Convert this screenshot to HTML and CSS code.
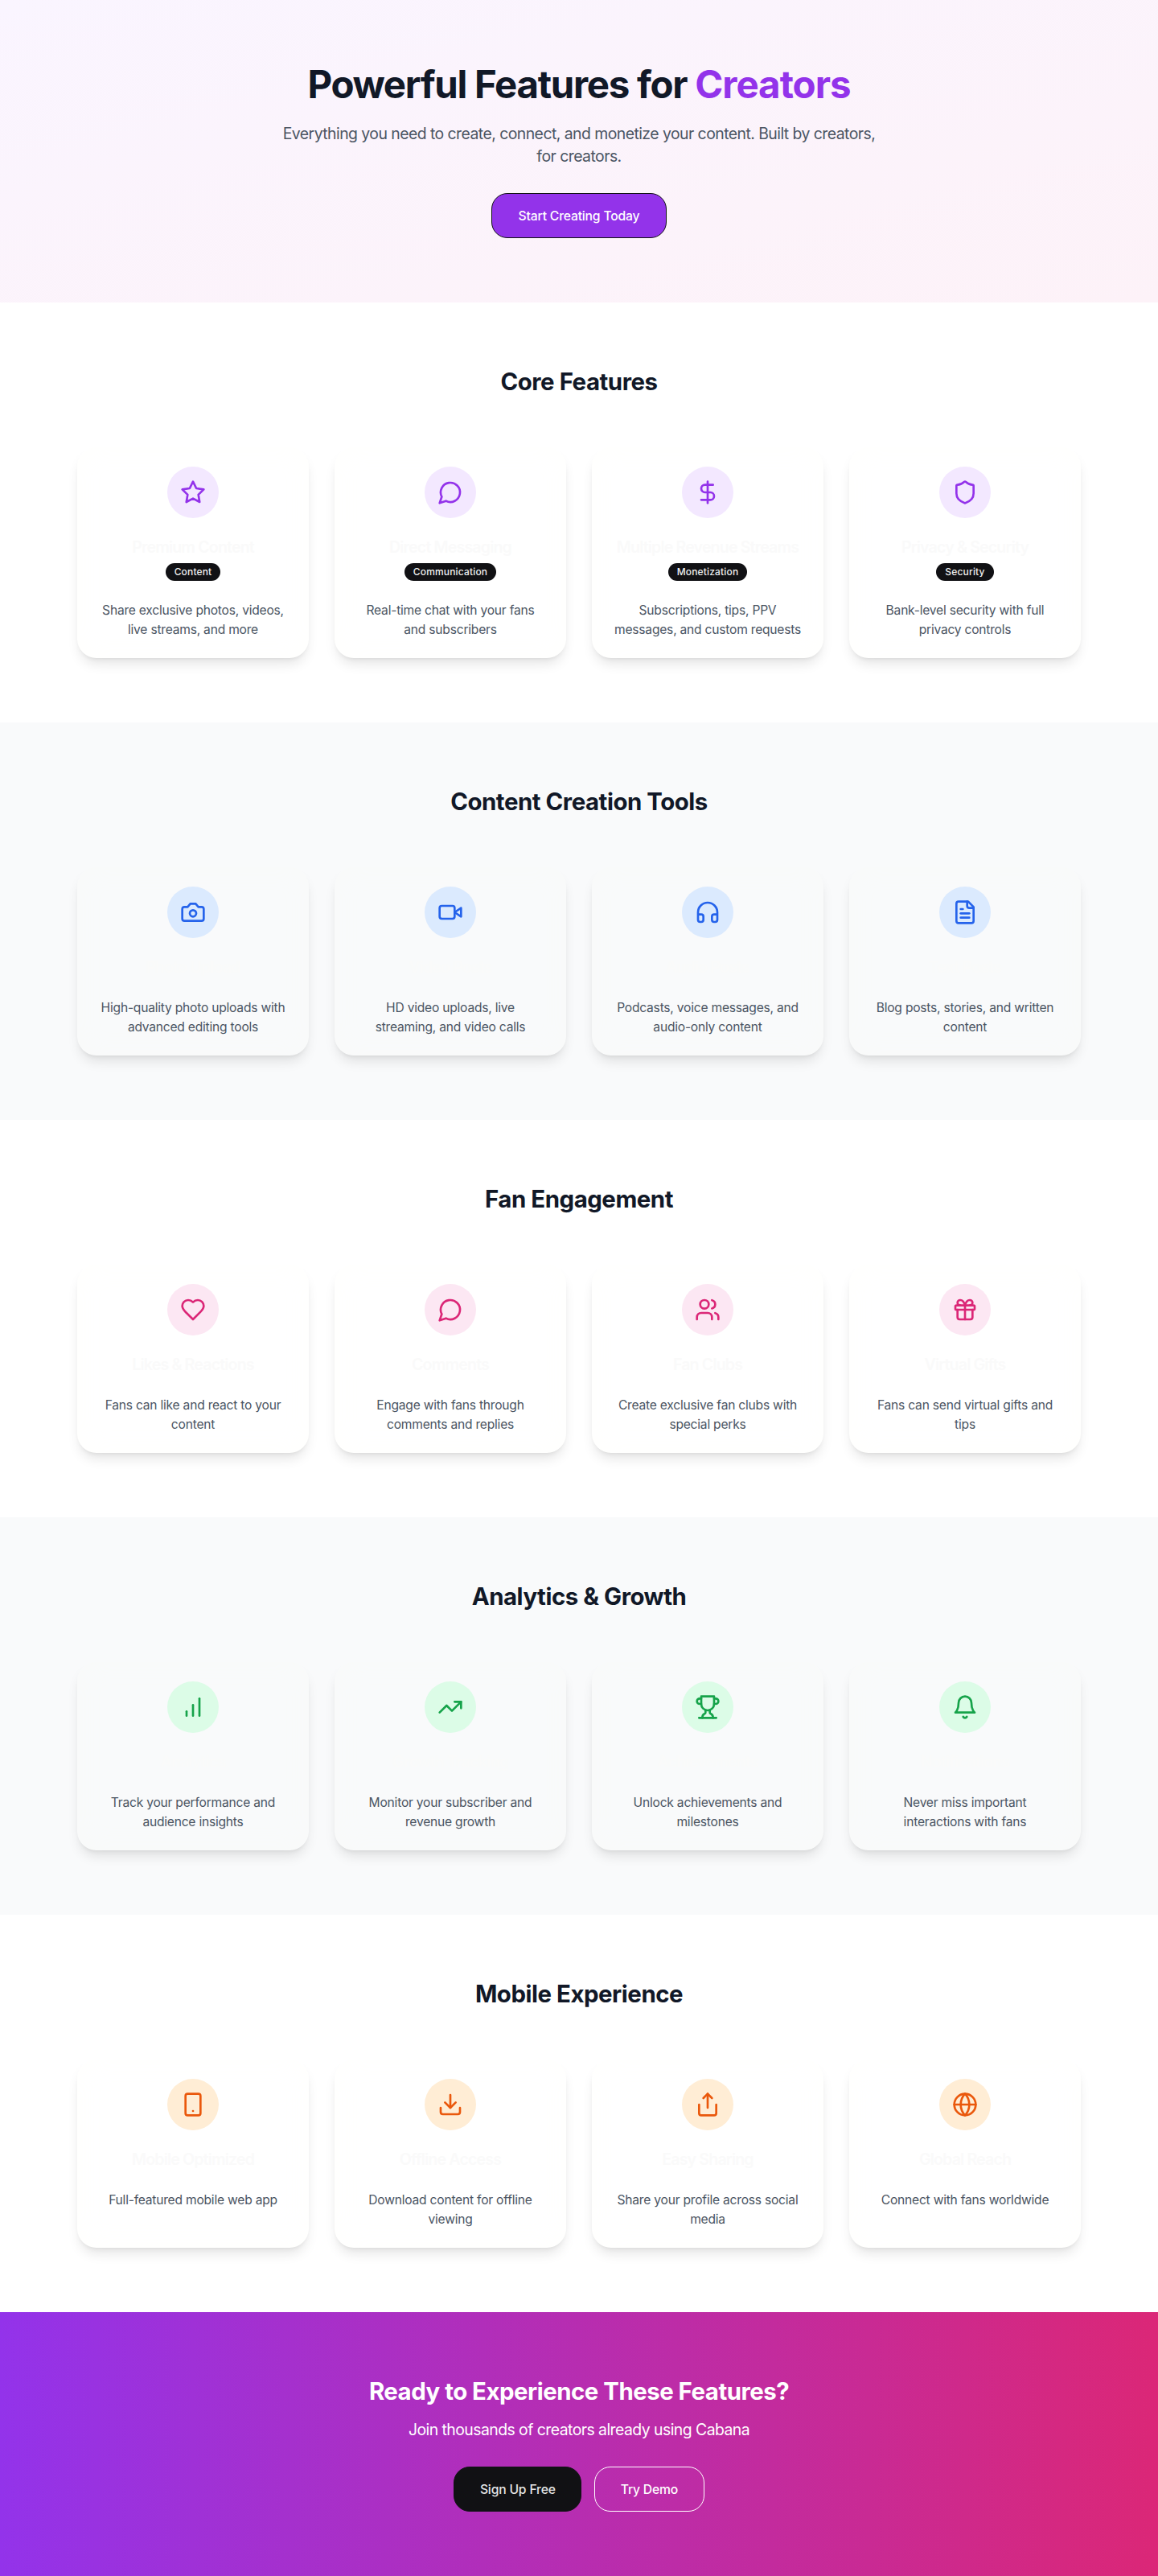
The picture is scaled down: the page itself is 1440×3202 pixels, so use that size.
FILE: index.html
```html
<!DOCTYPE html>
<html lang="en">
<head>
<meta charset="utf-8">
<title>Features - Cabana</title>
<meta name="viewport" content="width=device-width, initial-scale=1">
<link rel="stylesheet" href="styles.css">
</head>
<body>
<header class="hero">
  <h1 class="hero-title">Powerful Features for <span class="accent">Creators</span></h1>
  <p class="hero-text">Everything you need to create, connect, and monetize your content. Built by creators, for creators.</p>
  <a class="btn btn-brand">Start Creating Today</a>
</header>

<section class="section purple">
  <h2 class="section-title">Core Features</h2>
  <div class="grid">
    <article class="card">
      <div class="icon"><svg viewBox="0 0 24 24"><path d="M12 2l3.09 6.26L22 9.27l-5 4.87 1.18 6.88L12 17.77l-6.18 3.25L7 14.14 2 9.27l6.91-1.01L12 2z"/></svg></div>
      <h3 class="card-title">Premium Content</h3>
      <span class="badge">Content</span>
      <p class="card-text">Share exclusive photos, videos, live streams, and more</p>
    </article>
    <article class="card">
      <div class="icon"><svg viewBox="0 0 24 24"><path d="M7.9 20A9 9 0 1 0 4 16.1L2 22Z"/></svg></div>
      <h3 class="card-title">Direct Messaging</h3>
      <span class="badge">Communication</span>
      <p class="card-text">Real-time chat with your fans and subscribers</p>
    </article>
    <article class="card">
      <div class="icon"><svg viewBox="0 0 24 24"><path d="M12 2v20"/><path d="M17 5H9.5a3.5 3.5 0 0 0 0 7h5a3.5 3.5 0 0 1 0 7H6"/></svg></div>
      <h3 class="card-title">Multiple Revenue Streams</h3>
      <span class="badge">Monetization</span>
      <p class="card-text">Subscriptions, tips, PPV messages, and custom requests</p>
    </article>
    <article class="card">
      <div class="icon"><svg viewBox="0 0 24 24"><path d="M20 13c0 5-3.5 7.5-7.66 8.95a1 1 0 0 1-.67-.01C7.5 20.5 4 18 4 13V6a1 1 0 0 1 1-1c2 0 4.5-1.2 6.24-2.72a1.17 1.17 0 0 1 1.52 0C14.51 3.81 17 5 19 5a1 1 0 0 1 1 1z"/></svg></div>
      <h3 class="card-title">Privacy &amp; Security</h3>
      <span class="badge">Security</span>
      <p class="card-text">Bank-level security with full privacy controls</p>
    </article>
  </div>
</section>

<section class="section muted blue">
  <h2 class="section-title">Content Creation Tools</h2>
  <div class="grid">
    <article class="card">
      <div class="icon"><svg viewBox="0 0 24 24"><path d="M14.5 4h-5L7 7H4a2 2 0 0 0-2 2v9a2 2 0 0 0 2 2h16a2 2 0 0 0 2-2V9a2 2 0 0 0-2-2h-3l-2.5-3z"/><circle cx="12" cy="13" r="3"/></svg></div>
      <h3 class="card-title">Photo Upload</h3>
      <p class="card-text">High-quality photo uploads with advanced editing tools</p>
    </article>
    <article class="card">
      <div class="icon"><svg viewBox="0 0 24 24"><path d="m22 8-6 4 6 4V8Z"/><rect x="2" y="6" width="14" height="12" rx="2"/></svg></div>
      <h3 class="card-title">Video Posts</h3>
      <p class="card-text">HD video uploads, live<br>streaming, and video calls</p>
    </article>
    <article class="card">
      <div class="icon"><svg viewBox="0 0 24 24"><path d="M3 14h3a2 2 0 0 1 2 2v3a2 2 0 0 1-2 2H5a2 2 0 0 1-2-2v-7a9 9 0 0 1 18 0v7a2 2 0 0 1-2 2h-1a2 2 0 0 1-2-2v-3a2 2 0 0 1 2-2h3"/></svg></div>
      <h3 class="card-title">Audio Posts</h3>
      <p class="card-text">Podcasts, voice messages, and audio-only content</p>
    </article>
    <article class="card">
      <div class="icon"><svg viewBox="0 0 24 24"><path d="M15 2H6a2 2 0 0 0-2 2v16a2 2 0 0 0 2 2h12a2 2 0 0 0 2-2V7Z"/><path d="M14 2v4a2 2 0 0 0 2 2h4"/><path d="M10 9H8"/><path d="M16 13H8"/><path d="M16 17H8"/></svg></div>
      <h3 class="card-title">Text Posts</h3>
      <p class="card-text">Blog posts, stories, and written content</p>
    </article>
  </div>
</section>

<section class="section pink">
  <h2 class="section-title">Fan Engagement</h2>
  <div class="grid">
    <article class="card">
      <div class="icon"><svg viewBox="0 0 24 24"><path d="M19 14c1.49-1.46 3-3.21 3-5.5A5.5 5.5 0 0 0 16.5 3c-1.76 0-3 .5-4.5 2-1.5-1.5-2.74-2-4.5-2A5.5 5.5 0 0 0 2 8.5c0 2.3 1.5 4.05 3 5.5l7 7Z"/></svg></div>
      <h3 class="card-title">Likes &amp; Reactions</h3>
      <p class="card-text">Fans can like and react to your content</p>
    </article>
    <article class="card">
      <div class="icon"><svg viewBox="0 0 24 24"><path d="M7.9 20A9 9 0 1 0 4 16.1L2 22Z"/></svg></div>
      <h3 class="card-title">Comments</h3>
      <p class="card-text">Engage with fans through comments and replies</p>
    </article>
    <article class="card">
      <div class="icon"><svg viewBox="0 0 24 24"><path d="M16 21v-2a4 4 0 0 0-4-4H6a4 4 0 0 0-4 4v2"/><circle cx="9" cy="7" r="4"/><path d="M22 21v-2a4 4 0 0 0-3-3.87"/><path d="M16 3.13a4 4 0 0 1 0 7.75"/></svg></div>
      <h3 class="card-title">Fan Clubs</h3>
      <p class="card-text">Create exclusive fan clubs with special perks</p>
    </article>
    <article class="card">
      <div class="icon"><svg viewBox="0 0 24 24"><rect x="3" y="8" width="18" height="4" rx="1"/><path d="M12 8v13"/><path d="M19 12v7a2 2 0 0 1-2 2H7a2 2 0 0 1-2-2v-7"/><path d="M7.5 8a2.5 2.5 0 0 1 0-5A4.8 8 0 0 1 12 8a4.8 8 0 0 1 4.5-5 2.5 2.5 0 0 1 0 5"/></svg></div>
      <h3 class="card-title">Virtual Gifts</h3>
      <p class="card-text">Fans can send virtual gifts and tips</p>
    </article>
  </div>
</section>

<section class="section muted green">
  <h2 class="section-title">Analytics &amp; Growth</h2>
  <div class="grid">
    <article class="card">
      <div class="icon"><svg viewBox="0 0 24 24"><path d="M12 20V10"/><path d="M18 20V4"/><path d="M6 20v-4"/></svg></div>
      <h3 class="card-title">Analytics</h3>
      <p class="card-text">Track your performance and audience insights</p>
    </article>
    <article class="card">
      <div class="icon"><svg viewBox="0 0 24 24"><path d="M22 7l-8.5 8.5-5-5L2 17"/><path d="M16 7h6v6"/></svg></div>
      <h3 class="card-title">Growth Tracking</h3>
      <p class="card-text">Monitor your subscriber and revenue growth</p>
    </article>
    <article class="card">
      <div class="icon"><svg viewBox="0 0 24 24"><path d="M6 9H4.5a2.5 2.5 0 0 1 0-5H6"/><path d="M18 9h1.5a2.5 2.5 0 0 0 0-5H18"/><path d="M4 22h16"/><path d="M10 14.66V17c0 .55-.47.98-.97 1.21C7.85 18.75 7 20.24 7 22"/><path d="M14 14.66V17c0 .55.47.98.97 1.21C16.15 18.75 17 20.24 17 22"/><path d="M18 2H6v7a6 6 0 0 0 12 0V2Z"/></svg></div>
      <h3 class="card-title">Achievements</h3>
      <p class="card-text">Unlock achievements and milestones</p>
    </article>
    <article class="card">
      <div class="icon"><svg viewBox="0 0 24 24"><path d="M6 8a6 6 0 0 1 12 0c0 7 3 9 3 9H3s3-2 3-9"/><path d="M10.3 21a1.94 1.94 0 0 0 3.4 0"/></svg></div>
      <h3 class="card-title">Notifications</h3>
      <p class="card-text">Never miss important interactions with fans</p>
    </article>
  </div>
</section>

<section class="section orange">
  <h2 class="section-title">Mobile Experience</h2>
  <div class="grid">
    <article class="card">
      <div class="icon"><svg viewBox="0 0 24 24"><rect x="5" y="2" width="14" height="20" rx="2"/><path d="M12 18h.01"/></svg></div>
      <h3 class="card-title">Mobile Optimized</h3>
      <p class="card-text">Full-featured mobile web app</p>
    </article>
    <article class="card">
      <div class="icon"><svg viewBox="0 0 24 24"><path d="M21 15v4a2 2 0 0 1-2 2H5a2 2 0 0 1-2-2v-4"/><path d="M7 10l5 5 5-5"/><path d="M12 15V3"/></svg></div>
      <h3 class="card-title">Offline Access</h3>
      <p class="card-text">Download content for offline viewing</p>
    </article>
    <article class="card">
      <div class="icon"><svg viewBox="0 0 24 24"><path d="M4 12v8a2 2 0 0 0 2 2h12a2 2 0 0 0 2-2v-8"/><path d="M16 6l-4-4-4 4"/><path d="M12 2v13"/></svg></div>
      <h3 class="card-title">Easy Sharing</h3>
      <p class="card-text">Share your profile across social media</p>
    </article>
    <article class="card">
      <div class="icon"><svg viewBox="0 0 24 24"><circle cx="12" cy="12" r="10"/><path d="M12 2a14.5 14.5 0 0 0 0 20 14.5 14.5 0 0 0 0-20"/><path d="M2 12h20"/></svg></div>
      <h3 class="card-title">Global Reach</h3>
      <p class="card-text">Connect with fans worldwide</p>
    </article>
  </div>
</section>

<section class="cta">
  <h2 class="cta-title">Ready to Experience These Features?</h2>
  <p class="cta-text">Join thousands of creators already using Cabana</p>
  <div class="cta-actions">
    <a class="btn btn-dark">Sign Up Free</a>
    <a class="btn btn-outline">Try Demo</a>
  </div>
</section>
</body>
</html>
```
FILE: styles.css
```css
* { box-sizing: border-box; margin: 0; padding: 0; }

body {
  font-family: Inter, "Liberation Sans", sans-serif;
  font-size: 15.6px;
  line-height: 24px;
  letter-spacing: -0.22px;
  color: #111827;
  background: #fff;
}

.hero {
  display: flex;
  flex-direction: column;
  align-items: center;
  padding: 80px 16px;
  text-align: center;
  background: linear-gradient(to bottom right, #faf5ff, #fdf2f8);
}
.hero-title {
  padding-top: 1px;
  font-size: 47.4px;
  line-height: 48px;
  font-weight: 700;
  letter-spacing: -1.3px;
}
.accent { color: #9333ea; letter-spacing: -0.97px; }
.hero-text {
  max-width: 750px;
  margin: 23px 0 32px;
  font-size: 19.4px;
  line-height: 28px;
  letter-spacing: -0.54px;
  color: #4b5563;
}

.btn {
  display: inline-flex;
  align-items: center;
  justify-content: center;
  height: 56px;
  padding: 1px 31.5px 0;
  border: 1px solid #111114;
  border-radius: 20px;
  font-weight: 500;
  font-size: 15.7px;
  letter-spacing: -0.18px;
  color: #fff;
}
.btn-brand { padding: 1px 32.5px 0; background: #9333ea; }
.btn-dark { background: #111114; color: #e5e5e5; }
.btn-outline { border-color: #fff; }

.section { padding: 80px 0; }
.muted { background: #f9fafb; }
.section-title {
  padding-top: 1px;
  margin-bottom: 63px;
  font-size: 29.4px;
  line-height: 36px;
  letter-spacing: -0.46px;
  font-weight: 700;
  text-align: center;
}
.grid {
  display: grid;
  grid-template-columns: repeat(4, 1fr);
  gap: 32px;
  max-width: 1280px;
  margin: 0 auto;
  padding: 0 16px;
}

.card {
  display: flex;
  flex-direction: column;
  align-items: center;
  padding: 24px 24px 23px;
  border-radius: 24px;
  text-align: center;
  box-shadow:
    0 10px 15px -3px rgba(0, 0, 0, .1),
    0 4px 6px -4px rgba(0, 0, 0, .1),
    inset 0 0 30px rgba(255, 253, 240, .15);
}
.icon {
  display: flex;
  align-items: center;
  justify-content: center;
  width: 64px;
  height: 64px;
  margin-bottom: 22px;
  border-radius: 50%;
}
.icon svg {
  width: 32px;
  height: 32px;
  fill: none;
  stroke: currentColor;
  stroke-width: 2;
  stroke-linecap: round;
  stroke-linejoin: round;
}
.purple .icon { background: #f3e8ff; color: #9333ea; }
.blue .icon { background: #dbeafe; color: #2563eb; }
.pink .icon { background: #fce7f3; color: #db2777; }
.green .icon { background: #dcfce7; color: #16a34a; }
.orange .icon { background: #ffedd5; color: #ea580c; }

.card-title {
  font-size: 19.6px;
  line-height: 28px;
  font-weight: 600;
  letter-spacing: -0.85px;
  color: #fafafa;
}
.badge {
  margin-top: 6px;
  padding: 3px 11px;
  border-radius: 11px;
  font-size: 12px;
  line-height: 16px;
  letter-spacing: 0.16px;
  font-weight: 500;
  color: #f0f0f0;
  background: #111114;
}
.card-text { margin-top: 25px; color: #4b5563; }

.cta {
  display: flex;
  flex-direction: column;
  align-items: center;
  padding: 80px 16px;
  text-align: center;
  color: #fff;
  background: linear-gradient(to right, #9333ea, #db2777);
}
.cta-title {
  padding-top: 1px;
  font-size: 29.4px;
  line-height: 36px;
  letter-spacing: -0.5px;
  font-weight: 700;
}
.cta-text {
  margin: 15px 0 32px;
  font-size: 19.4px;
  line-height: 28px;
  letter-spacing: -0.54px;
}
.cta-actions { display: flex; gap: 16px; }
```
